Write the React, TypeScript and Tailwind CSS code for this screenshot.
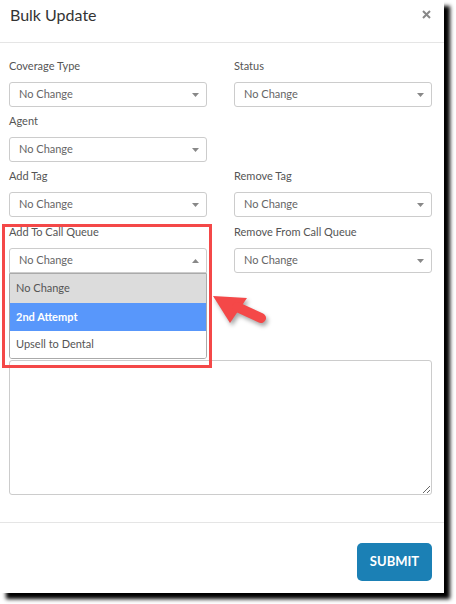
import React from "react";

const font = { fontFamily: "Lato, 'Open Sans', sans-serif" };

function Caret({ up = false }: { up?: boolean }) {
  return (
    <svg width="7" height="4" viewBox="0 0 7 4" className="shrink-0">
      {up ? <path d="M0 4 L3.5 0 L7 4 Z" fill="#888" /> : <path d="M0 0 L7 0 L3.5 4 Z" fill="#888" />}
    </svg>
  );
}

function Field({ label, open = false, after = "h-[6px]" }: { label: string; open?: boolean; after?: string }) {
  return (
    <div className="flex flex-col">
      <div className="text-[11px] leading-[16px] text-[#555] mb-[8px]">{label}</div>
      <div
        className={
          "relative h-[25px] border border-[#ccc] bg-white pl-[9px] pr-[7px] flex items-center justify-between text-[11px] text-[#666] " +
          (open ? "rounded-t-[3px]" : "rounded-[3px]")
        }
      >
        <span>No Change</span>
        <Caret up={open} />
        {open && (
          <div className="absolute left-[-1px] right-[-1px] top-[24px] z-10 border border-[#aaa] rounded-b-[3px] bg-white text-[11px] overflow-hidden">
            <div className="h-[29px] px-[6px] flex items-center bg-[#dcdcdc] text-[#555]">No Change</div>
            <div className="h-[28px] px-[6px] flex items-center bg-[#5897fb] text-white font-bold">2nd Attempt</div>
            <div className="h-[27px] px-[6px] flex items-center bg-white text-[#555]">Upsell to Dental</div>
          </div>
        )}
      </div>
      <div className={after} />
    </div>
  );
}

export default function App() {
  return (
    <div className="w-[456px] h-[604px] bg-white" style={font}>
      <div className="relative w-[444px] h-[593px] bg-white flex flex-col shadow-[6px_6px_4px_rgba(0,0,0,1)]">
        <div className="h-[43px] shrink-0 px-[10px] pt-[5px] flex items-start justify-between border-b border-[#e5e5e5]">
          <h2 className="text-[16px] leading-[20px] text-[#333]">Bulk Update</h2>
          <svg width="9" height="9" viewBox="0 0 9 9" className="mt-[5px] mr-[3px]">
            <path d="M1 1 L8 8 M8 1 L1 8" stroke="#888" strokeWidth="2" />
          </svg>
        </div>

        <div className="flex-1 pl-[9px] pr-[12px] pt-[15px] pb-[27px] flex flex-col">
          <div className="grid grid-cols-2 gap-x-[27px]">
            <Field label="Coverage Type" />
            <Field label="Status" />
            <Field label="Agent" />
            <div />
            <Field label="Add Tag" after="h-[7px]" />
            <Field label="Remove Tag" after="h-[7px]" />
            <Field label="Add To Call Queue" open />
            <Field label="Remove From Call Queue" />
          </div>
          {/* area hidden behind the open dropdown */}
          <div className="h-[81px] shrink-0" />
          <textarea className="h-[135px] shrink-0 w-full border border-[#ccc] rounded-[3px] outline-none" />
        </div>

        <div className="shrink-0 border-t border-[#e5e5e5] pt-[20px] pb-[12px] pr-[12px] flex justify-end">
          <button className="w-[75px] h-[38px] rounded-[5px] bg-[#1b80b5] text-white text-[13px] font-bold">SUBMIT</button>
        </div>

        <div className="absolute left-[2px] top-[224px] w-[210px] h-[144px] border-[3px] border-[#f44848] z-20 pointer-events-none" />
        <svg
          width="65"
          height="45"
          viewBox="0 0 65 45"
          className="absolute left-[205px] top-[285px] z-20 drop-shadow-[2px_3px_2px_rgba(0,0,0,0.35)]"
        >
          <path d="M8 11 L42 13 L25 38 Z" fill="#f44848" />
          <path d="M32 22 L56 33" stroke="#f44848" strokeWidth="10" strokeLinecap="round" />
        </svg>
      </div>
    </div>
  );
}
